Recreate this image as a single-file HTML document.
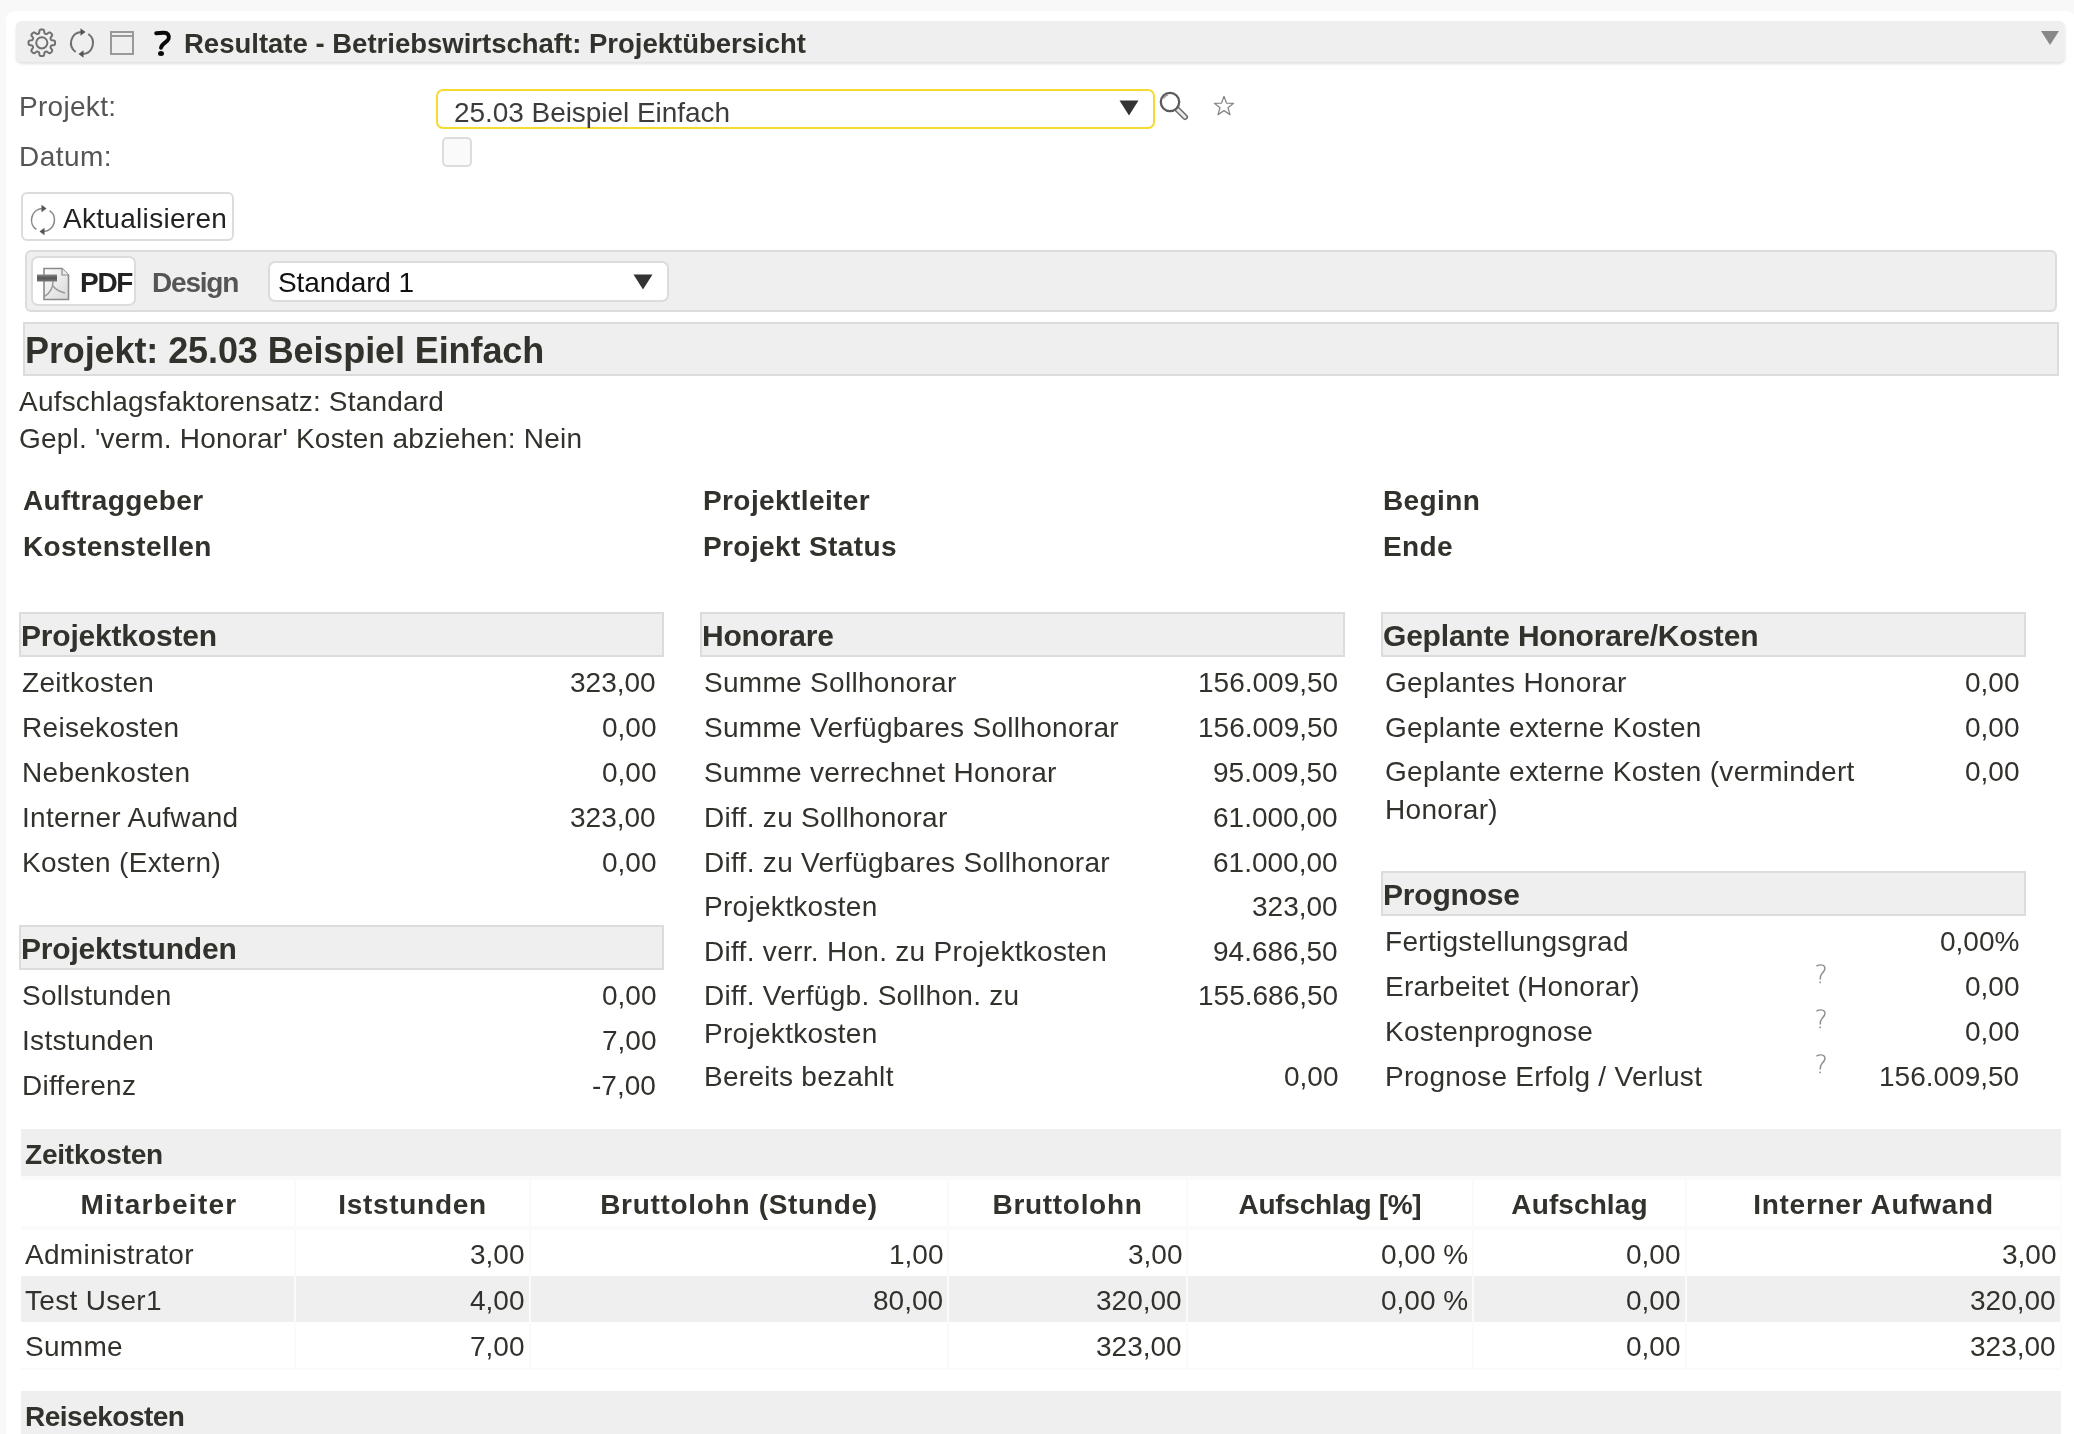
<!DOCTYPE html>
<html><head><meta charset="utf-8"><style>
html,body{margin:0;padding:0;width:2074px;height:1434px;overflow:hidden;background:#f8f8f8;}
body{position:relative;font-family:"Liberation Sans",sans-serif;}
.t{position:absolute;white-space:nowrap;font-family:"Liberation Sans",sans-serif;will-change:transform;}
.r{position:absolute;}
</style></head><body>
<div class="r" style="left:6px;top:11px;width:2070px;height:1500px;background:#fff;border-radius:9px;"></div>
<div class="r" style="left:16px;top:21px;width:2049px;height:41px;background:#efefef;border-radius:6px;box-shadow:0 2px 3px rgba(0,0,0,0.12);"></div>
<svg class="r" style="left:26px;top:27px" width="32" height="32" viewBox="0 0 32 32">
<g fill="none" stroke="#707070" stroke-width="2">
<path d="M29.08 15.80 L29.07 16.15 L29.05 16.49 L29.01 16.84 L28.93 17.18 L28.79 17.51 L28.51 17.81 L27.98 18.06 L27.18 18.22 L26.33 18.33 L25.70 18.45 L25.33 18.62 L25.11 18.83 L24.97 19.05 L24.85 19.27 L24.75 19.51 L24.66 19.74 L24.58 19.99 L24.53 20.25 L24.54 20.54 L24.68 20.93 L25.03 21.46 L25.56 22.14 L26.01 22.82 L26.21 23.36 L26.19 23.77 L26.06 24.11 L25.87 24.40 L25.66 24.68 L25.43 24.94 L25.19 25.19 L24.94 25.43 L24.68 25.66 L24.40 25.87 L24.11 26.06 L23.77 26.19 L23.36 26.21 L22.82 26.01 L22.14 25.56 L21.46 25.03 L20.93 24.68 L20.54 24.54 L20.25 24.53 L19.99 24.58 L19.74 24.66 L19.51 24.75 L19.27 24.85 L19.05 24.97 L18.83 25.11 L18.62 25.33 L18.45 25.70 L18.33 26.33 L18.22 27.18 L18.06 27.98 L17.81 28.51 L17.51 28.79 L17.18 28.93 L16.84 29.01 L16.49 29.05 L16.15 29.07 L15.80 29.08 L15.45 29.07 L15.11 29.05 L14.76 29.01 L14.42 28.93 L14.09 28.79 L13.79 28.51 L13.54 27.98 L13.38 27.18 L13.27 26.33 L13.15 25.70 L12.98 25.33 L12.77 25.11 L12.55 24.97 L12.33 24.85 L12.09 24.75 L11.86 24.66 L11.61 24.58 L11.35 24.53 L11.06 24.54 L10.67 24.68 L10.14 25.03 L9.46 25.56 L8.78 26.01 L8.24 26.21 L7.83 26.19 L7.49 26.06 L7.20 25.87 L6.92 25.66 L6.66 25.43 L6.41 25.19 L6.17 24.94 L5.94 24.68 L5.73 24.40 L5.54 24.11 L5.41 23.77 L5.39 23.36 L5.59 22.82 L6.04 22.14 L6.57 21.46 L6.92 20.93 L7.06 20.54 L7.07 20.25 L7.02 19.99 L6.94 19.74 L6.85 19.51 L6.75 19.27 L6.63 19.05 L6.49 18.83 L6.27 18.62 L5.90 18.45 L5.27 18.33 L4.42 18.22 L3.62 18.06 L3.09 17.81 L2.81 17.51 L2.67 17.18 L2.59 16.84 L2.55 16.49 L2.53 16.15 L2.52 15.80 L2.53 15.45 L2.55 15.11 L2.59 14.76 L2.67 14.42 L2.81 14.09 L3.09 13.79 L3.62 13.54 L4.42 13.38 L5.27 13.27 L5.90 13.15 L6.27 12.98 L6.49 12.77 L6.63 12.55 L6.75 12.33 L6.85 12.09 L6.94 11.86 L7.02 11.61 L7.07 11.35 L7.06 11.06 L6.92 10.67 L6.57 10.14 L6.04 9.46 L5.59 8.78 L5.39 8.24 L5.41 7.83 L5.54 7.49 L5.73 7.20 L5.94 6.92 L6.17 6.66 L6.41 6.41 L6.66 6.17 L6.92 5.94 L7.20 5.73 L7.49 5.54 L7.83 5.41 L8.24 5.39 L8.78 5.59 L9.46 6.04 L10.14 6.57 L10.67 6.92 L11.06 7.06 L11.35 7.07 L11.61 7.02 L11.86 6.94 L12.09 6.85 L12.33 6.75 L12.55 6.63 L12.77 6.49 L12.98 6.27 L13.15 5.90 L13.27 5.27 L13.38 4.42 L13.54 3.62 L13.79 3.09 L14.09 2.81 L14.42 2.67 L14.76 2.59 L15.11 2.55 L15.45 2.53 L15.80 2.52 L16.15 2.53 L16.49 2.55 L16.84 2.59 L17.18 2.67 L17.51 2.81 L17.81 3.09 L18.06 3.62 L18.22 4.42 L18.33 5.27 L18.45 5.90 L18.62 6.27 L18.83 6.49 L19.05 6.63 L19.27 6.75 L19.51 6.85 L19.74 6.94 L19.99 7.02 L20.25 7.07 L20.54 7.06 L20.93 6.92 L21.46 6.57 L22.14 6.04 L22.82 5.59 L23.36 5.39 L23.77 5.41 L24.11 5.54 L24.40 5.73 L24.68 5.94 L24.94 6.17 L25.19 6.41 L25.43 6.66 L25.66 6.92 L25.87 7.20 L26.06 7.49 L26.19 7.83 L26.21 8.24 L26.01 8.78 L25.56 9.46 L25.03 10.14 L24.68 10.67 L24.54 11.06 L24.53 11.35 L24.58 11.61 L24.66 11.86 L24.75 12.09 L24.85 12.33 L24.97 12.55 L25.11 12.77 L25.33 12.98 L25.70 13.15 L26.33 13.27 L27.18 13.38 L27.98 13.54 L28.51 13.79 L28.79 14.09 L28.93 14.42 L29.01 14.76 L29.05 15.11 L29.07 15.45 Z" stroke-linejoin="round"/>
<circle cx="15.8" cy="15.8" r="5.6"/>
</g></svg>
<svg class="r" style="left:66px;top:27px" width="32" height="32" viewBox="0 0 32 32"><path d="M9.69 25.01 A11 11 0 0 1 15.23 5.03 M22.31 6.99 A11 11 0 0 1 16.77 26.97" fill="none" stroke="#707070" stroke-width="2"/><path d="M19.50 5.00 L14.50 1.20 L14.50 8.80 Z M12.50 27.00 L17.50 23.20 L17.50 30.80 Z" fill="#555"/></svg>
<div class="r" style="left:110px;top:31px;width:24px;height:24px;border:2px solid #999;box-sizing:border-box;"></div>
<div class="r" style="left:110px;top:35px;width:24px;height:2px;background:#999;"></div>
<svg class="r" style="left:150px;top:26px" width="26" height="34" viewBox="150 26 26 34"><path d="M156.2 33.2 L163.5 32.8 C168 32.6 169.5 35.5 168.6 38.8 C167.6 42.2 161.8 43 161 47.8" fill="none" stroke="#0a0a0a" stroke-width="3.9" stroke-linecap="round"/><ellipse cx="161" cy="53.4" rx="3" ry="2.5" fill="#0a0a0a"/></svg>
<div class="t" style="left:184px;top:30px;font-size:27.5px;line-height:27.5px;font-weight:700;color:#32322d;">Resultate - Betriebswirtschaft: Projektübersicht</div>
<svg class="r" style="left:2040px;top:30px" width="20" height="16"><path d="M1 1 L19 1 L10 15 Z" fill="#888"/></svg>
<div class="t" style="left:19px;top:93px;font-size:28px;line-height:28px;font-weight:400;color:#555;letter-spacing:0.3px;">Projekt:</div>
<div class="t" style="left:19px;top:143px;font-size:28px;line-height:28px;font-weight:400;color:#555;letter-spacing:0.45px;">Datum:</div>
<div class="r" style="left:436px;top:89px;width:719px;height:40px;border:2px solid #f5da30;border-radius:7px;box-sizing:border-box;background:#fff;"></div>
<div class="t" style="left:454px;top:99px;font-size:28px;line-height:28px;font-weight:400;color:#3c3c3c;letter-spacing:-0.05px;">25.03 Beispiel Einfach</div>
<svg class="r" style="left:1119px;top:100px" width="20" height="16"><path d="M0.5 0.5 L19.5 0.5 L10 15.5 Z" fill="#333"/></svg>
<svg class="r" style="left:1155px;top:88px" width="36" height="36" viewBox="0 0 36 36">
<path d="M21.5 20.5 L30 29" stroke="#6a6a6a" stroke-width="6" stroke-linecap="round"/>
<path d="M21.5 20.5 L30 29" stroke="#e8e8e8" stroke-width="3" stroke-linecap="round"/>
<circle cx="15" cy="14" r="9.2" fill="#fff" stroke="#5a5a5a" stroke-width="2.3"/>
<path d="M8.5 10.5 A7.5 7.5 0 0 1 13 6.8" fill="none" stroke="#999" stroke-width="1.5"/>
</svg>
<svg class="r" style="left:1212px;top:94px" width="24" height="24" viewBox="0 0 24 24">
<path d="M12 2.3 L14.5 9.1 L21.6 9.3 L16 13.7 L18 20.6 L12 16.6 L6 20.6 L8 13.7 L2.4 9.3 L9.5 9.1 Z" fill="none" stroke="#888" stroke-width="1.3" stroke-linejoin="round"/>
</svg>
<div class="r" style="left:442px;top:137px;width:30px;height:30px;border:2px solid #dcdcdc;border-radius:5px;box-sizing:border-box;background:#fafafa;"></div>
<div class="r" style="left:21px;top:192px;width:213px;height:49px;border:2px solid #dcdcdc;border-radius:6px;box-sizing:border-box;background:#fff;"></div>
<svg class="r" style="left:26.799999999999997px;top:203.7px" width="32" height="32" viewBox="0 0 32 32"><path d="M9.40 25.42 A11.5 11.5 0 0 1 15.20 4.53 M22.60 6.58 A11.5 11.5 0 0 1 16.80 27.47" fill="none" stroke="#888" stroke-width="1.6"/><path d="M19.50 4.50 L14.50 0.70 L14.50 8.30 Z M12.50 27.50 L17.50 23.70 L17.50 31.30 Z" fill="#555"/></svg>
<div class="t" style="left:63px;top:205px;font-size:28px;line-height:28px;font-weight:400;color:#222;letter-spacing:0.3px;">Aktualisieren</div>
<div class="r" style="left:25px;top:250px;width:2032px;height:62px;border:2px solid #dcdcdc;border-radius:6px;box-sizing:border-box;background:#efefef;"></div>
<div class="r" style="left:31px;top:256px;width:105px;height:50px;border:2px solid #dcdcdc;border-radius:7px;box-sizing:border-box;background:#fff;"></div>
<svg class="r" style="left:36px;top:266px" width="34" height="36" viewBox="0 0 34 36">
<defs><linearGradient id="pg" x1="0" y1="0" x2="1" y2="1"><stop offset="0" stop-color="#fdfdfd"/><stop offset="1" stop-color="#d8d8d8"/></linearGradient>
<linearGradient id="bg" x1="0" y1="0" x2="0" y2="1"><stop offset="0" stop-color="#888"/><stop offset="0.5" stop-color="#555"/><stop offset="1" stop-color="#777"/></linearGradient></defs>
<path d="M8 2.5 L26 2.5 L32.5 9 L32.5 33.5 L8 33.5 Z" fill="url(#pg)" stroke="#8a8a8a" stroke-width="1.6"/>
<path d="M26 2.5 L26 9 L32.5 9" fill="#eee" stroke="#8a8a8a" stroke-width="1.2"/>
<path d="M1 8.5 L21 8.5 L21 15.5 L1 15.5 Z" fill="url(#bg)"/>
<path d="M17 15 C17 21 14 27 9 30 M17 20 C20 24 25 26 29 27" fill="none" stroke="#9a9a9a" stroke-width="1.5"/>
</svg>
<div class="t" style="left:79.5px;top:269px;font-size:28px;line-height:28px;font-weight:700;color:#222;letter-spacing:-1.3px;">PDF</div>
<div class="t" style="left:152px;top:269px;font-size:28px;line-height:28px;font-weight:700;color:#555;letter-spacing:-1.2px;">Design</div>
<div class="r" style="left:268px;top:261px;width:401px;height:41px;border:2px solid #dcdcdc;border-radius:7px;box-sizing:border-box;background:#fff;"></div>
<div class="t" style="left:278px;top:269px;font-size:28px;line-height:28px;font-weight:400;color:#111;letter-spacing:-0.1px;">Standard 1</div>
<svg class="r" style="left:633px;top:274px" width="20" height="16"><path d="M0.5 0.5 L19.5 0.5 L10 15.5 Z" fill="#333"/></svg>
<div class="r" style="left:23px;top:322px;width:2036px;height:54px;border:2px solid #dcdcdc;box-sizing:border-box;background:#efefef;"></div>
<div class="t" style="left:25px;top:333px;font-size:36px;line-height:36px;font-weight:700;color:#32322d;letter-spacing:-0.1px;">Projekt: 25.03 Beispiel Einfach</div>
<div class="t" style="left:19px;top:388px;font-size:28px;line-height:28px;font-weight:400;color:#32322d;letter-spacing:0.2px;">Aufschlagsfaktorensatz: Standard</div>
<div class="t" style="left:19px;top:425px;font-size:28px;line-height:28px;font-weight:400;color:#32322d;letter-spacing:0.22px;">Gepl. 'verm. Honorar' Kosten abziehen: Nein</div>
<div class="t" style="left:23px;top:487px;font-size:28px;line-height:28px;font-weight:700;color:#32322d;letter-spacing:0.4px;">Auftraggeber</div>
<div class="t" style="left:23px;top:533px;font-size:28px;line-height:28px;font-weight:700;color:#32322d;letter-spacing:0.4px;">Kostenstellen</div>
<div class="t" style="left:703px;top:487px;font-size:28px;line-height:28px;font-weight:700;color:#32322d;letter-spacing:0.4px;">Projektleiter</div>
<div class="t" style="left:703px;top:533px;font-size:28px;line-height:28px;font-weight:700;color:#32322d;letter-spacing:0.4px;">Projekt Status</div>
<div class="t" style="left:1383px;top:487px;font-size:28px;line-height:28px;font-weight:700;color:#32322d;letter-spacing:0.4px;">Beginn</div>
<div class="t" style="left:1383px;top:533px;font-size:28px;line-height:28px;font-weight:700;color:#32322d;letter-spacing:0.4px;">Ende</div>
<div class="r" style="left:19px;top:612px;width:645px;height:45px;border:2px solid #dcdcdc;box-sizing:border-box;background:#efefef;"></div>
<div class="t" style="left:21px;top:621px;font-size:30px;line-height:30px;font-weight:700;color:#32322d;letter-spacing:-0.2px;">Projektkosten</div>
<div class="t" style="left:22px;top:669px;font-size:28px;line-height:28px;font-weight:400;color:#32322d;letter-spacing:0.3px;">Zeitkosten</div>
<div class="t" style="right:1418px;top:669px;font-size:28px;line-height:28px;font-weight:400;color:#32322d;text-align:right;">323,00</div>
<div class="t" style="left:22px;top:714px;font-size:28px;line-height:28px;font-weight:400;color:#32322d;letter-spacing:0.3px;">Reisekosten</div>
<div class="t" style="right:1418px;top:714px;font-size:28px;line-height:28px;font-weight:400;color:#32322d;text-align:right;">0,00</div>
<div class="t" style="left:22px;top:759px;font-size:28px;line-height:28px;font-weight:400;color:#32322d;letter-spacing:0.3px;">Nebenkosten</div>
<div class="t" style="right:1418px;top:759px;font-size:28px;line-height:28px;font-weight:400;color:#32322d;text-align:right;">0,00</div>
<div class="t" style="left:22px;top:804px;font-size:28px;line-height:28px;font-weight:400;color:#32322d;letter-spacing:0.3px;">Interner Aufwand</div>
<div class="t" style="right:1418px;top:804px;font-size:28px;line-height:28px;font-weight:400;color:#32322d;text-align:right;">323,00</div>
<div class="t" style="left:22px;top:849px;font-size:28px;line-height:28px;font-weight:400;color:#32322d;letter-spacing:0.3px;">Kosten (Extern)</div>
<div class="t" style="right:1418px;top:849px;font-size:28px;line-height:28px;font-weight:400;color:#32322d;text-align:right;">0,00</div>
<div class="r" style="left:19px;top:925px;width:645px;height:45px;border:2px solid #dcdcdc;box-sizing:border-box;background:#efefef;"></div>
<div class="t" style="left:21px;top:934px;font-size:30px;line-height:30px;font-weight:700;color:#32322d;letter-spacing:-0.2px;">Projektstunden</div>
<div class="t" style="left:22px;top:982px;font-size:28px;line-height:28px;font-weight:400;color:#32322d;letter-spacing:0.3px;">Sollstunden</div>
<div class="t" style="right:1418px;top:982px;font-size:28px;line-height:28px;font-weight:400;color:#32322d;text-align:right;">0,00</div>
<div class="t" style="left:22px;top:1027px;font-size:28px;line-height:28px;font-weight:400;color:#32322d;letter-spacing:0.3px;">Iststunden</div>
<div class="t" style="right:1418px;top:1027px;font-size:28px;line-height:28px;font-weight:400;color:#32322d;text-align:right;">7,00</div>
<div class="t" style="left:22px;top:1072px;font-size:28px;line-height:28px;font-weight:400;color:#32322d;letter-spacing:0.3px;">Differenz</div>
<div class="t" style="right:1418px;top:1072px;font-size:28px;line-height:28px;font-weight:400;color:#32322d;text-align:right;">-7,00</div>
<div class="r" style="left:700px;top:612px;width:645px;height:45px;border:2px solid #dcdcdc;box-sizing:border-box;background:#efefef;"></div>
<div class="t" style="left:702px;top:621px;font-size:30px;line-height:30px;font-weight:700;color:#32322d;letter-spacing:-0.2px;">Honorare</div>
<div class="t" style="left:704px;top:669px;font-size:28px;line-height:28px;font-weight:400;color:#32322d;letter-spacing:0.3px;">Summe Sollhonorar</div>
<div class="t" style="right:736px;top:669px;font-size:28px;line-height:28px;font-weight:400;color:#32322d;text-align:right;">156.009,50</div>
<div class="t" style="left:704px;top:714px;font-size:28px;line-height:28px;font-weight:400;color:#32322d;letter-spacing:0.3px;">Summe Verfügbares Sollhonorar</div>
<div class="t" style="right:736px;top:714px;font-size:28px;line-height:28px;font-weight:400;color:#32322d;text-align:right;">156.009,50</div>
<div class="t" style="left:704px;top:759px;font-size:28px;line-height:28px;font-weight:400;color:#32322d;letter-spacing:0.3px;">Summe verrechnet Honorar</div>
<div class="t" style="right:736px;top:759px;font-size:28px;line-height:28px;font-weight:400;color:#32322d;text-align:right;">95.009,50</div>
<div class="t" style="left:704px;top:804px;font-size:28px;line-height:28px;font-weight:400;color:#32322d;letter-spacing:0.3px;">Diff. zu Sollhonorar</div>
<div class="t" style="right:736px;top:804px;font-size:28px;line-height:28px;font-weight:400;color:#32322d;text-align:right;">61.000,00</div>
<div class="t" style="left:704px;top:849px;font-size:28px;line-height:28px;font-weight:400;color:#32322d;letter-spacing:0.3px;">Diff. zu Verfügbares Sollhonorar</div>
<div class="t" style="right:736px;top:849px;font-size:28px;line-height:28px;font-weight:400;color:#32322d;text-align:right;">61.000,00</div>
<div class="t" style="left:704px;top:893px;font-size:28px;line-height:28px;font-weight:400;color:#32322d;letter-spacing:0.3px;">Projektkosten</div>
<div class="t" style="right:736px;top:893px;font-size:28px;line-height:28px;font-weight:400;color:#32322d;text-align:right;">323,00</div>
<div class="t" style="left:704px;top:938px;font-size:28px;line-height:28px;font-weight:400;color:#32322d;letter-spacing:0.3px;">Diff. verr. Hon. zu Projektkosten</div>
<div class="t" style="right:736px;top:938px;font-size:28px;line-height:28px;font-weight:400;color:#32322d;text-align:right;">94.686,50</div>
<div class="t" style="left:704px;top:982px;font-size:28px;line-height:28px;font-weight:400;color:#32322d;letter-spacing:0.3px;">Diff. Verfügb. Sollhon. zu</div>
<div class="t" style="right:736px;top:982px;font-size:28px;line-height:28px;font-weight:400;color:#32322d;text-align:right;">155.686,50</div>
<div class="t" style="left:704px;top:1020px;font-size:28px;line-height:28px;font-weight:400;color:#32322d;letter-spacing:0.3px;">Projektkosten</div>
<div class="t" style="left:704px;top:1063px;font-size:28px;line-height:28px;font-weight:400;color:#32322d;letter-spacing:0.3px;">Bereits bezahlt</div>
<div class="t" style="right:736px;top:1063px;font-size:28px;line-height:28px;font-weight:400;color:#32322d;text-align:right;">0,00</div>
<div class="r" style="left:1381px;top:612px;width:645px;height:45px;border:2px solid #dcdcdc;box-sizing:border-box;background:#efefef;"></div>
<div class="t" style="left:1383px;top:621px;font-size:30px;line-height:30px;font-weight:700;color:#32322d;letter-spacing:-0.2px;">Geplante Honorare/Kosten</div>
<div class="t" style="left:1385px;top:669px;font-size:28px;line-height:28px;font-weight:400;color:#32322d;letter-spacing:0.3px;">Geplantes Honorar</div>
<div class="t" style="right:55px;top:669px;font-size:28px;line-height:28px;font-weight:400;color:#32322d;text-align:right;">0,00</div>
<div class="t" style="left:1385px;top:714px;font-size:28px;line-height:28px;font-weight:400;color:#32322d;letter-spacing:0.3px;">Geplante externe Kosten</div>
<div class="t" style="right:55px;top:714px;font-size:28px;line-height:28px;font-weight:400;color:#32322d;text-align:right;">0,00</div>
<div class="t" style="left:1385px;top:758px;font-size:28px;line-height:28px;font-weight:400;color:#32322d;letter-spacing:0.3px;">Geplante externe Kosten (vermindert</div>
<div class="t" style="right:55px;top:758px;font-size:28px;line-height:28px;font-weight:400;color:#32322d;text-align:right;">0,00</div>
<div class="t" style="left:1385px;top:796px;font-size:28px;line-height:28px;font-weight:400;color:#32322d;letter-spacing:0.3px;">Honorar)</div>
<div class="r" style="left:1381px;top:871px;width:645px;height:45px;border:2px solid #dcdcdc;box-sizing:border-box;background:#efefef;"></div>
<div class="t" style="left:1383px;top:880px;font-size:30px;line-height:30px;font-weight:700;color:#32322d;letter-spacing:-0.2px;">Prognose</div>
<div class="t" style="left:1385px;top:928px;font-size:28px;line-height:28px;font-weight:400;color:#32322d;letter-spacing:0.3px;">Fertigstellungsgrad</div>
<div class="t" style="right:55px;top:928px;font-size:28px;line-height:28px;font-weight:400;color:#32322d;text-align:right;">0,00%</div>
<div class="t" style="left:1385px;top:973px;font-size:28px;line-height:28px;font-weight:400;color:#32322d;letter-spacing:0.3px;">Erarbeitet (Honorar)</div>
<div class="t" style="right:55px;top:973px;font-size:28px;line-height:28px;font-weight:400;color:#32322d;text-align:right;">0,00</div>
<svg class="r" style="left:1814px;top:963px" width="14" height="22" viewBox="0 0 14 22"><path d="M2.5 3.2 C5 1.5 9 1.2 10.5 3.5 C12 6 10 8.5 8 10.5 C6.5 12 6.2 14 6.2 16.5" fill="none" stroke="#8c8c8c" stroke-width="1.4"/><rect x="5.4" y="18.6" width="1.6" height="1.6" fill="#8c8c8c"/></svg>
<div class="t" style="left:1385px;top:1018px;font-size:28px;line-height:28px;font-weight:400;color:#32322d;letter-spacing:0.3px;">Kostenprognose</div>
<div class="t" style="right:55px;top:1018px;font-size:28px;line-height:28px;font-weight:400;color:#32322d;text-align:right;">0,00</div>
<svg class="r" style="left:1814px;top:1008px" width="14" height="22" viewBox="0 0 14 22"><path d="M2.5 3.2 C5 1.5 9 1.2 10.5 3.5 C12 6 10 8.5 8 10.5 C6.5 12 6.2 14 6.2 16.5" fill="none" stroke="#8c8c8c" stroke-width="1.4"/><rect x="5.4" y="18.6" width="1.6" height="1.6" fill="#8c8c8c"/></svg>
<div class="t" style="left:1385px;top:1063px;font-size:28px;line-height:28px;font-weight:400;color:#32322d;letter-spacing:0.3px;">Prognose Erfolg / Verlust</div>
<div class="t" style="right:55px;top:1063px;font-size:28px;line-height:28px;font-weight:400;color:#32322d;text-align:right;">156.009,50</div>
<svg class="r" style="left:1814px;top:1053px" width="14" height="22" viewBox="0 0 14 22"><path d="M2.5 3.2 C5 1.5 9 1.2 10.5 3.5 C12 6 10 8.5 8 10.5 C6.5 12 6.2 14 6.2 16.5" fill="none" stroke="#8c8c8c" stroke-width="1.4"/><rect x="5.4" y="18.6" width="1.6" height="1.6" fill="#8c8c8c"/></svg>
<div class="r" style="left:21px;top:1129px;width:2040px;height:47px;background:#efefef;"></div>
<div class="t" style="left:25px;top:1141px;font-size:28px;line-height:28px;font-weight:700;color:#32322d;letter-spacing:-0.2px;">Zeitkosten</div>
<div class="r" style="left:21px;top:1176px;width:2040px;height:194px;background:#fafafa;"></div>
<div class="r" style="left:21px;top:1180px;width:273px;height:46px;background:#fff;"></div>
<div class="r" style="left:296px;top:1180px;width:233px;height:46px;background:#fff;"></div>
<div class="r" style="left:531px;top:1180px;width:416px;height:46px;background:#fff;"></div>
<div class="r" style="left:949px;top:1180px;width:237px;height:46px;background:#fff;"></div>
<div class="r" style="left:1188px;top:1180px;width:284px;height:46px;background:#fff;"></div>
<div class="r" style="left:1474px;top:1180px;width:211px;height:46px;background:#fff;"></div>
<div class="r" style="left:1687px;top:1180px;width:373px;height:46px;background:#fff;"></div>
<div class="r" style="left:21px;top:1230px;width:273px;height:46px;background:#fff;"></div>
<div class="r" style="left:296px;top:1230px;width:233px;height:46px;background:#fff;"></div>
<div class="r" style="left:531px;top:1230px;width:416px;height:46px;background:#fff;"></div>
<div class="r" style="left:949px;top:1230px;width:237px;height:46px;background:#fff;"></div>
<div class="r" style="left:1188px;top:1230px;width:284px;height:46px;background:#fff;"></div>
<div class="r" style="left:1474px;top:1230px;width:211px;height:46px;background:#fff;"></div>
<div class="r" style="left:1687px;top:1230px;width:373px;height:46px;background:#fff;"></div>
<div class="r" style="left:21px;top:1276px;width:273px;height:46px;background:#efefef;"></div>
<div class="r" style="left:296px;top:1276px;width:233px;height:46px;background:#efefef;"></div>
<div class="r" style="left:531px;top:1276px;width:416px;height:46px;background:#efefef;"></div>
<div class="r" style="left:949px;top:1276px;width:237px;height:46px;background:#efefef;"></div>
<div class="r" style="left:1188px;top:1276px;width:284px;height:46px;background:#efefef;"></div>
<div class="r" style="left:1474px;top:1276px;width:211px;height:46px;background:#efefef;"></div>
<div class="r" style="left:1687px;top:1276px;width:373px;height:46px;background:#efefef;"></div>
<div class="r" style="left:21px;top:1322px;width:273px;height:46px;background:#fff;"></div>
<div class="r" style="left:296px;top:1322px;width:233px;height:46px;background:#fff;"></div>
<div class="r" style="left:531px;top:1322px;width:416px;height:46px;background:#fff;"></div>
<div class="r" style="left:949px;top:1322px;width:237px;height:46px;background:#fff;"></div>
<div class="r" style="left:1188px;top:1322px;width:284px;height:46px;background:#fff;"></div>
<div class="r" style="left:1474px;top:1322px;width:211px;height:46px;background:#fff;"></div>
<div class="r" style="left:1687px;top:1322px;width:373px;height:46px;background:#fff;"></div>
<div class="t" style="left:21.625px;width:274px;top:1191px;font-size:28px;line-height:28px;font-weight:700;color:#32322d;text-align:center;letter-spacing:1.25px">Mitarbeiter</div>
<div class="t" style="left:295.35px;width:235px;top:1191px;font-size:28px;line-height:28px;font-weight:700;color:#32322d;text-align:center;letter-spacing:0.7px">Iststunden</div>
<div class="t" style="left:530.35px;width:418px;top:1191px;font-size:28px;line-height:28px;font-weight:700;color:#32322d;text-align:center;letter-spacing:0.7px">Bruttolohn (Stunde)</div>
<div class="t" style="left:948.35px;width:239px;top:1191px;font-size:28px;line-height:28px;font-weight:700;color:#32322d;text-align:center;letter-spacing:0.7px">Bruttolohn</div>
<div class="t" style="left:1186.85px;width:286px;top:1191px;font-size:28px;line-height:28px;font-weight:700;color:#32322d;text-align:center;letter-spacing:-0.3px">Aufschlag [%]</div>
<div class="t" style="left:1473.05px;width:213px;top:1191px;font-size:28px;line-height:28px;font-weight:700;color:#32322d;text-align:center;letter-spacing:0.1px">Aufschlag</div>
<div class="t" style="left:1686.35px;width:375px;top:1191px;font-size:28px;line-height:28px;font-weight:700;color:#32322d;text-align:center;letter-spacing:0.7px">Interner Aufwand</div>
<div class="t" style="left:25px;top:1241px;font-size:28px;line-height:28px;font-weight:400;color:#32322d;letter-spacing:0.3px;">Administrator</div>
<div class="t" style="right:1550px;top:1241px;font-size:28px;line-height:28px;font-weight:400;color:#32322d;text-align:right;">3,00</div>
<div class="t" style="right:1130.5px;top:1241px;font-size:28px;line-height:28px;font-weight:400;color:#32322d;text-align:right;">1,00</div>
<div class="t" style="right:892px;top:1241px;font-size:28px;line-height:28px;font-weight:400;color:#32322d;text-align:right;">3,00</div>
<div class="t" style="right:606px;top:1241px;font-size:28px;line-height:28px;font-weight:400;color:#32322d;text-align:right;">0,00 %</div>
<div class="t" style="right:393.5px;top:1241px;font-size:28px;line-height:28px;font-weight:400;color:#32322d;text-align:right;">0,00</div>
<div class="t" style="right:18px;top:1241px;font-size:28px;line-height:28px;font-weight:400;color:#32322d;text-align:right;">3,00</div>
<div class="t" style="left:25px;top:1287px;font-size:28px;line-height:28px;font-weight:400;color:#32322d;letter-spacing:0.3px;">Test User1</div>
<div class="t" style="right:1550px;top:1287px;font-size:28px;line-height:28px;font-weight:400;color:#32322d;text-align:right;">4,00</div>
<div class="t" style="right:1130.5px;top:1287px;font-size:28px;line-height:28px;font-weight:400;color:#32322d;text-align:right;">80,00</div>
<div class="t" style="right:892px;top:1287px;font-size:28px;line-height:28px;font-weight:400;color:#32322d;text-align:right;">320,00</div>
<div class="t" style="right:606px;top:1287px;font-size:28px;line-height:28px;font-weight:400;color:#32322d;text-align:right;">0,00 %</div>
<div class="t" style="right:393.5px;top:1287px;font-size:28px;line-height:28px;font-weight:400;color:#32322d;text-align:right;">0,00</div>
<div class="t" style="right:18px;top:1287px;font-size:28px;line-height:28px;font-weight:400;color:#32322d;text-align:right;">320,00</div>
<div class="t" style="left:25px;top:1333px;font-size:28px;line-height:28px;font-weight:400;color:#32322d;letter-spacing:0.3px;">Summe</div>
<div class="t" style="right:1550px;top:1333px;font-size:28px;line-height:28px;font-weight:400;color:#32322d;text-align:right;">7,00</div>
<div class="t" style="right:892px;top:1333px;font-size:28px;line-height:28px;font-weight:400;color:#32322d;text-align:right;">323,00</div>
<div class="t" style="right:393.5px;top:1333px;font-size:28px;line-height:28px;font-weight:400;color:#32322d;text-align:right;">0,00</div>
<div class="t" style="right:18px;top:1333px;font-size:28px;line-height:28px;font-weight:400;color:#32322d;text-align:right;">323,00</div>
<div class="r" style="left:21px;top:1391px;width:2040px;height:60px;background:#efefef;"></div>
<div class="t" style="left:25px;top:1403px;font-size:28px;line-height:28px;font-weight:700;color:#32322d;letter-spacing:-0.5px;">Reisekosten</div>
</body></html>
